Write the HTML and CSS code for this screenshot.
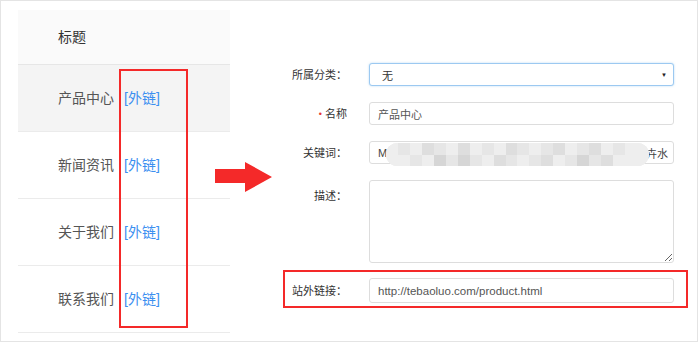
FILE: index.html
```html
<!DOCTYPE html>
<html lang="zh-CN">
  <head>
    <meta charset="utf-8" />
    <meta name="viewport" content="width=device-width, initial-scale=1" />
    <title>站外链接</title>
    <link rel="stylesheet" href="styles.css">
  </head>
  <body>
    <div class="frame">
      <!-- column list -->
      <section class="list-panel">
        <table class="column-table">
          <thead>
            <tr><th>标题</th></tr>
          </thead>
          <tbody>
            <tr class="is-hover"><td>产品中心<a class="ext-link" href="#">[外链]</a></td></tr>
            <tr><td>新闻资讯<a class="ext-link" href="#">[外链]</a></td></tr>
            <tr><td>关于我们<a class="ext-link" href="#">[外链]</a></td></tr>
            <tr><td>联系我们<a class="ext-link" href="#">[外链]</a></td></tr>
          </tbody>
        </table>
      </section>

      <!-- edit form -->
      <form class="edit-form">
        <div class="form-row">
          <label class="form-label">所属分类：</label>
          <div class="select-box">
            <span>无</span>
            <span class="caret">&#9660;</span>
          </div>
        </div>
        <div class="form-row">
          <label class="form-label"><span class="required">&bull;</span> 名称</label>
          <input class="form-input" type="text" value="产品中心" />
        </div>
        <div class="form-row">
          <label class="form-label">关键词：</label>
          <div class="keyword-box">
            <span>M</span>
            <span class="keyword-end">卉水</span>
            <div class="mosaic">
              <i class="c1"></i><i class="c2"></i><i class="c1"></i><i class="c3"></i><i class="c2"></i><i class="c1"></i><i class="c3"></i><i class="c1"></i><i class="c2"></i><i class="c1"></i><i class="c3"></i><i class="c2"></i><i class="c1"></i><i class="c2"></i><i class="c3"></i><i class="c1"></i><i class="c2"></i><i class="c3"></i><i class="c1"></i><i class="c2"></i><i class="c1"></i><i class="c1"></i>
              <i class="c1"></i><i class="c1"></i><i class="c2"></i><i class="c1"></i><i class="c4"></i><i class="c2"></i><i class="c4"></i><i class="c2"></i><i class="c1"></i><i class="c3"></i><i class="c2"></i><i class="c1"></i><i class="c2"></i><i class="c3"></i><i class="c1"></i><i class="c2"></i><i class="c4"></i><i class="c2"></i><i class="c3"></i><i class="c1"></i><i class="c1"></i><i class="c1"></i>
            </div>
          </div>
        </div>
        <div class="form-row row-top">
          <label class="form-label">描述：</label>
          <textarea class="form-textarea"></textarea>
        </div>
        <div class="form-row is-marked">
          <label class="form-label">站外链接：</label>
          <input class="form-input url-input" type="text" value="http://tebaoluo.com/product.html" />
        </div>
      </form>

      <!-- annotations -->
      <div class="mark-box"></div>
      <svg class="arrow" width="58" height="31" viewBox="0 0 58 31">
        <polygon points="0,7 30,7 30,0 57,15 30,30 30,21 0,21" fill="#f42929" />
      </svg>
    </div>
  </body>
</html>
```

FILE: styles.css
```css
:root {
  --border-color: #e4e4e4;
  --text-color: #555555;
  --label-color: #333333;
  --link-color: #3c8ff0;
  --mark-color: #f42929;
  --font-primary: "Liberation Sans", "Noto Sans CJK SC", sans-serif;
}

*,
*::before,
*::after {
  margin: 0;
  padding: 0;
  box-sizing: border-box;
}

body {
  background: #ffffff;
  font-family: var(--font-primary);
  color: var(--text-color);
}

.frame {
  position: relative;
  display: flex;
  width: 698px;
  height: 342px;
  border: 1px solid var(--border-color);
  overflow: hidden;
}

/* left list */
.list-panel {
  padding: 9px 0 0 17px;
}

.column-table {
  width: 212px;
  border-collapse: collapse;
  font-size: 14px;
  line-height: 20px;
}

.column-table th,
.column-table td {
  text-align: left;
  padding-left: 40px;
  border-bottom: 1px solid #ebebeb;
}

.column-table th {
  height: 54px;
  font-weight: normal;
  color: var(--label-color);
  background: #fafafa;
  border-bottom-color: #e6e6e6;
}

.column-table td {
  height: 67px;
  color: var(--text-color);
}

.column-table .is-hover td {
  background: #f4f4f4;
}

.ext-link {
  margin-left: 10px;
  color: var(--link-color);
  text-decoration: none;
}

/* right form */
.edit-form {
  margin-left: 53px;
  padding-top: 60px;
  font-size: 11px;
}

.form-row {
  display: grid;
  grid-template-columns: 62px 305px;
  column-gap: 22px;
  align-items: center;
  width: 405px;
  padding-right: 12px;
  border: 2px solid transparent;
  margin-bottom: 12px;
}

.form-row.row-top {
  align-items: start;
  margin-bottom: 5px;
}

.form-row.row-top .form-label {
  padding-top: 8px;
}

.form-row.is-marked {
  border-color: var(--mark-color);
  padding-top: 6px;
  padding-bottom: 3px;
}

.form-label {
  text-align: right;
  white-space: nowrap;
  color: var(--label-color);
  line-height: 16px;
}

.required {
  color: #e53935;
  font-size: 9px;
  vertical-align: 1px;
}

.form-input,
.select-box,
.keyword-box {
  height: 23px;
  width: 305px;
  padding: 0 8px;
  border: 1px solid #dddddd;
  border-radius: 3px;
  background: #ffffff;
  font-family: var(--font-primary);
  font-size: 11px;
  color: var(--text-color);
  outline: none;
}

.url-input {
  height: 25px;
  font-size: 11.5px;
}

.select-box {
  display: flex;
  align-items: center;
  justify-content: space-between;
  padding: 0 6px 0 12px;
  border-color: #9cc9f1;
  box-shadow: 0 0 2px rgba(102, 175, 233, 0.5);
  color: #333333;
}

.caret {
  font-size: 6px;
  color: #222222;
}

.keyword-box {
  position: relative;
  display: flex;
  align-items: center;
  justify-content: space-between;
  color: #444444;
}

.keyword-end {
  margin-right: -3px;
}

.mosaic {
  position: absolute;
  left: 16px;
  top: 1px;
  width: 263px;
  height: 23px;
  display: grid;
  grid-template-columns: repeat(22, 1fr);
  grid-template-rows: repeat(2, 1fr);
  border-radius: 12px;
  overflow: hidden;
  background: #ececec;
}

.mosaic .c1 { background: #eeeeee; }
.mosaic .c2 { background: #e6e6e6; }
.mosaic .c3 { background: #dedede; }
.mosaic .c4 { background: #d6d6d6; }

.form-textarea {
  width: 305px;
  height: 83px;
  border: 1px solid #dddddd;
  border-radius: 3px;
  resize: both;
  outline: none;
}

/* annotations */
.mark-box {
  position: absolute;
  left: 118px;
  top: 68px;
  width: 69px;
  height: 259px;
  border: 2px solid var(--mark-color);
}

.arrow {
  position: absolute;
  left: 214px;
  top: 161px;
}
```
